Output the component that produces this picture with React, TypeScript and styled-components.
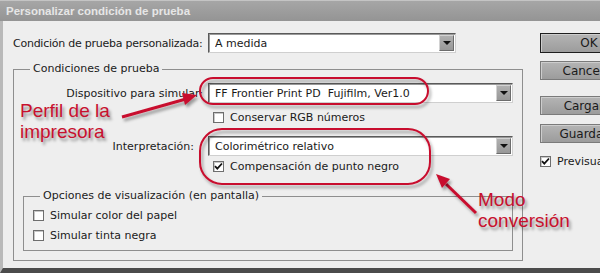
import React from "react";
import styled, { createGlobalStyle } from "styled-components";

const Global = createGlobalStyle`
  html, body {
    margin: 0;
    padding: 0;
    background: #eeeeee;
    overflow: hidden;
  }
`

const ui = `"DejaVu Sans", "Liberation Sans", sans-serif`
const red = "#c8102e"

const Dialog = styled.div`
  position: relative;
  width: 600px;
  height: 273px;
  overflow: hidden;
  display: flex;
  flex-direction: column;
  font-family: ${ui};
  font-size: 11px;
  color: #1a1a1a;
`

const TitleBar = styled.div`
  height: 20px;
  flex: none;
  display: flex;
  align-items: center;
  padding-left: 6px;
  border-top: 1px solid #c4c4c4;
  background: linear-gradient(#a6a6a6, #949494);
  color: #e6e6e6;
  font-family: "Liberation Sans", Arial, sans-serif;
  font-weight: bold;
  font-size: 11.5px;
`

const Body = styled.div`
  flex: 1;
  display: flex;
  background: #eeeeee;
  border-left: 3px solid #b9b9b9;
  border-bottom: 5px solid #4b4b4b;
  padding-left: 10px;
`

const Main = styled.div`
  width: 510px;
  flex: none;
  display: flex;
  flex-direction: column;
`

const Row = styled.div<{ $top?: number }>`
  display: flex;
  align-items: center;
  margin-top: ${p => p.$top ?? 0}px;
`

const Label = styled.div<{ $w: number; $pad?: number; $left?: boolean }>`
  width: ${p => p.$w}px;
  flex: none;
  text-align: ${p => (p.$left ? "left" : "right")};
  padding-right: ${p => p.$pad ?? 5}px;
  box-sizing: border-box;
  white-space: nowrap;
  letter-spacing: ${p => (p.$left ? "-0.25px" : "normal")};
`

const Select = styled.div<{ $w: number }>`
  width: ${p => p.$w}px;
  height: 20px;
  box-sizing: border-box;
  display: flex;
  align-items: center;
  background: #ffffff;
  border: 1px solid;
  border-color: #5a5a5a #cfcfcf #cfcfcf #5a5a5a;
  box-shadow: inset 1px 1px 0 #9a9a9a;
  padding-left: 6px;
  white-space: pre;
`

const SelectText = styled.span`
  flex: 1;
  overflow: hidden;
`

const ArrowBtn = styled.div`
  width: 15px;
  height: 16px;
  margin-right: 1px;
  flex: none;
  box-sizing: border-box;
  display: flex;
  align-items: center;
  justify-content: center;
  background: linear-gradient(#b0b0b0, #989898);
  border: 1px solid;
  border-color: #d2d2d2 #6c6c6c #6c6c6c #d2d2d2;
  &::after {
    content: "";
    border-left: 4px solid transparent;
    border-right: 4px solid transparent;
    border-top: 4px solid #111;
  }
`

const Box = styled.span`
  width: 11px;
  height: 11px;
  flex: none;
  box-sizing: border-box;
  background: #fff;
  border: 1px solid #6e6e6e;
  box-shadow: inset 1px 1px 0 #c8c8c8;
  display: flex;
  align-items: center;
  justify-content: center;
`

const CheckRow = styled.div<{ $top?: number; $indent?: number }>`
  display: flex;
  align-items: center;
  gap: 6px;
  height: 12px;
  margin-top: ${p => p.$top ?? 0}px;
  margin-left: ${p => p.$indent ?? 0}px;
  white-space: nowrap;
`

const Group = styled.fieldset<{ $top: number; $w: number; $inner?: boolean }>`
  margin: ${p => p.$top}px 0 ${p => (p.$inner ? 9 : 0)}px ${p => (p.$inner ? 9 : 0)}px;
  width: ${p => p.$w}px;
  box-sizing: border-box;
  min-width: 0;
  border: 1px solid #8e8e8e;
  padding: 0 0 ${p => (p.$inner ? 9 : 0)}px ${p => (p.$inner ? 9 : 0)}px;
  display: flex;
  flex-direction: column;
`

const Legend = styled.legend<{ $left: number }>`
  margin-left: ${p => p.$left}px;
  padding: 0 3px;
  line-height: 14px;
  font-size: 11px;
`

const Side = styled.div`
  margin-left: 17px;
  display: flex;
  flex-direction: column;
`

const Button = styled.div<{ $top: number; $def?: boolean }>`
  width: 98px;
  height: ${p => (p.$def ? 20 : 19)}px;
  margin-top: ${p => p.$top}px;
  box-sizing: border-box;
  display: flex;
  align-items: center;
  justify-content: center;
  background: linear-gradient(#b4b4b4, #9c9c9c);
  border: 1px solid ${p => (p.$def ? "#1e1e1e" : "#7a7a7a")};
  box-shadow: inset 1px 1px 0 #cdcdcd;
  color: #1a1a1a;
  font-size: 12px;
`

const Overlay = styled.svg`
  position: absolute;
  left: 0;
  top: 0;
  pointer-events: none;
  overflow: visible;
`

const Note = styled.div<{ $x: number; $y: number }>`
  position: absolute;
  left: ${p => p.$x}px;
  top: ${p => p.$y}px;
  font-family: "Liberation Sans", Arial, sans-serif;
  font-size: 19px;
  line-height: 21px;
  color: ${red};
  text-shadow: 2px 3px 3px rgba(0, 0, 0, 0.4);
  white-space: nowrap;
`

const Check = () => (
  <svg width="9" height="9" viewBox="0 0 9 9">
    <path d="M1 4.2 L3.3 6.6 L8 1.5" fill="none" stroke="#111" strokeWidth="1.8" />
  </svg>
)

const Dropdown = ({ w, text }: { w: number; text: string }) => (
  <Select $w={w}>
    <SelectText>{text}</SelectText>
    <ArrowBtn />
  </Select>
)

const Annotations = () => (
  <>
    <Overlay width="600" height="273">
      <defs>
        <filter id="sh" x="-10%" y="-30%" width="130%" height="160%">
          <feDropShadow dx="2" dy="3" stdDeviation="1.6" floodColor="#000" floodOpacity="0.35" />
        </filter>
      </defs>
      <g filter="url(#sh)" stroke={red} fill="none" strokeWidth="2">
        <rect x="200" y="78" width="228" height="26" rx="13" />
        <rect x="200" y="129" width="230" height="55" rx="22" />
        <line x1="122" y1="117" x2="186" y2="99" strokeWidth="3" />
        <line x1="476" y1="213" x2="446" y2="184" strokeWidth="3" />
      </g>
      <g filter="url(#sh)" fill={red}>
        <polygon points="197,95 185,105 182,93" />
        <polygon points="436,174 450,179 442,188" />
      </g>
    </Overlay>
    <Note $x={20} $y={100}>Perfil de la<br />impresora</Note>
    <Note $x={478} $y={189}>Modo<br />conversión</Note>
  </>
)

export default function App() {
  return (
    <Dialog>
      <Global />
      <TitleBar>Personalizar condición de prueba</TitleBar>
      <Body>
        <Main>
          <Row $top={12}>
            <Label $w={195} $left>Condición de prueba personalizada:</Label>
            <Dropdown w={248} text="A medida" />
          </Row>
          <Group $top={9} $w={510}>
            <Legend $left={16}>Condiciones de prueba</Legend>
            <Row $top={7}>
              <Label $w={194}>Dispositivo para simular:</Label>
              <Dropdown w={305} text="FF Frontier Print PD  Fujifilm, Ver1.0" />
            </Row>
            <CheckRow $top={8} $indent={199}>
              <Box />
              Conservar RGB números
            </CheckRow>
            <Row $top={13}>
              <Label $w={194} $pad={14}>Interpretación:</Label>
              <Dropdown w={305} text="Colorimétrico relativo" />
            </Row>
            <CheckRow $top={4} $indent={199}>
              <Box><Check /></Box>
              Compensación de punto negro
            </CheckRow>
            <Group $top={17} $w={490} $inner>
              <Legend $left={7}>Opciones de visualización (en pantalla)</Legend>
              <CheckRow $top={6}>
                <Box />
                Simular color del papel
              </CheckRow>
              <CheckRow $top={8}>
                <Box />
                Simular tinta negra
              </CheckRow>
            </Group>
          </Group>
        </Main>
        <Side>
          <Button $top={12} $def>OK</Button>
          <Button $top={8}>Cancelar</Button>
          <Button $top={16}>Cargar...</Button>
          <Button $top={9}>Guardar...</Button>
          <CheckRow $top={12}>
            <Box><Check /></Box>
            Previsualizar
          </CheckRow>
        </Side>
      </Body>
      <Annotations />
    </Dialog>
  );
}
